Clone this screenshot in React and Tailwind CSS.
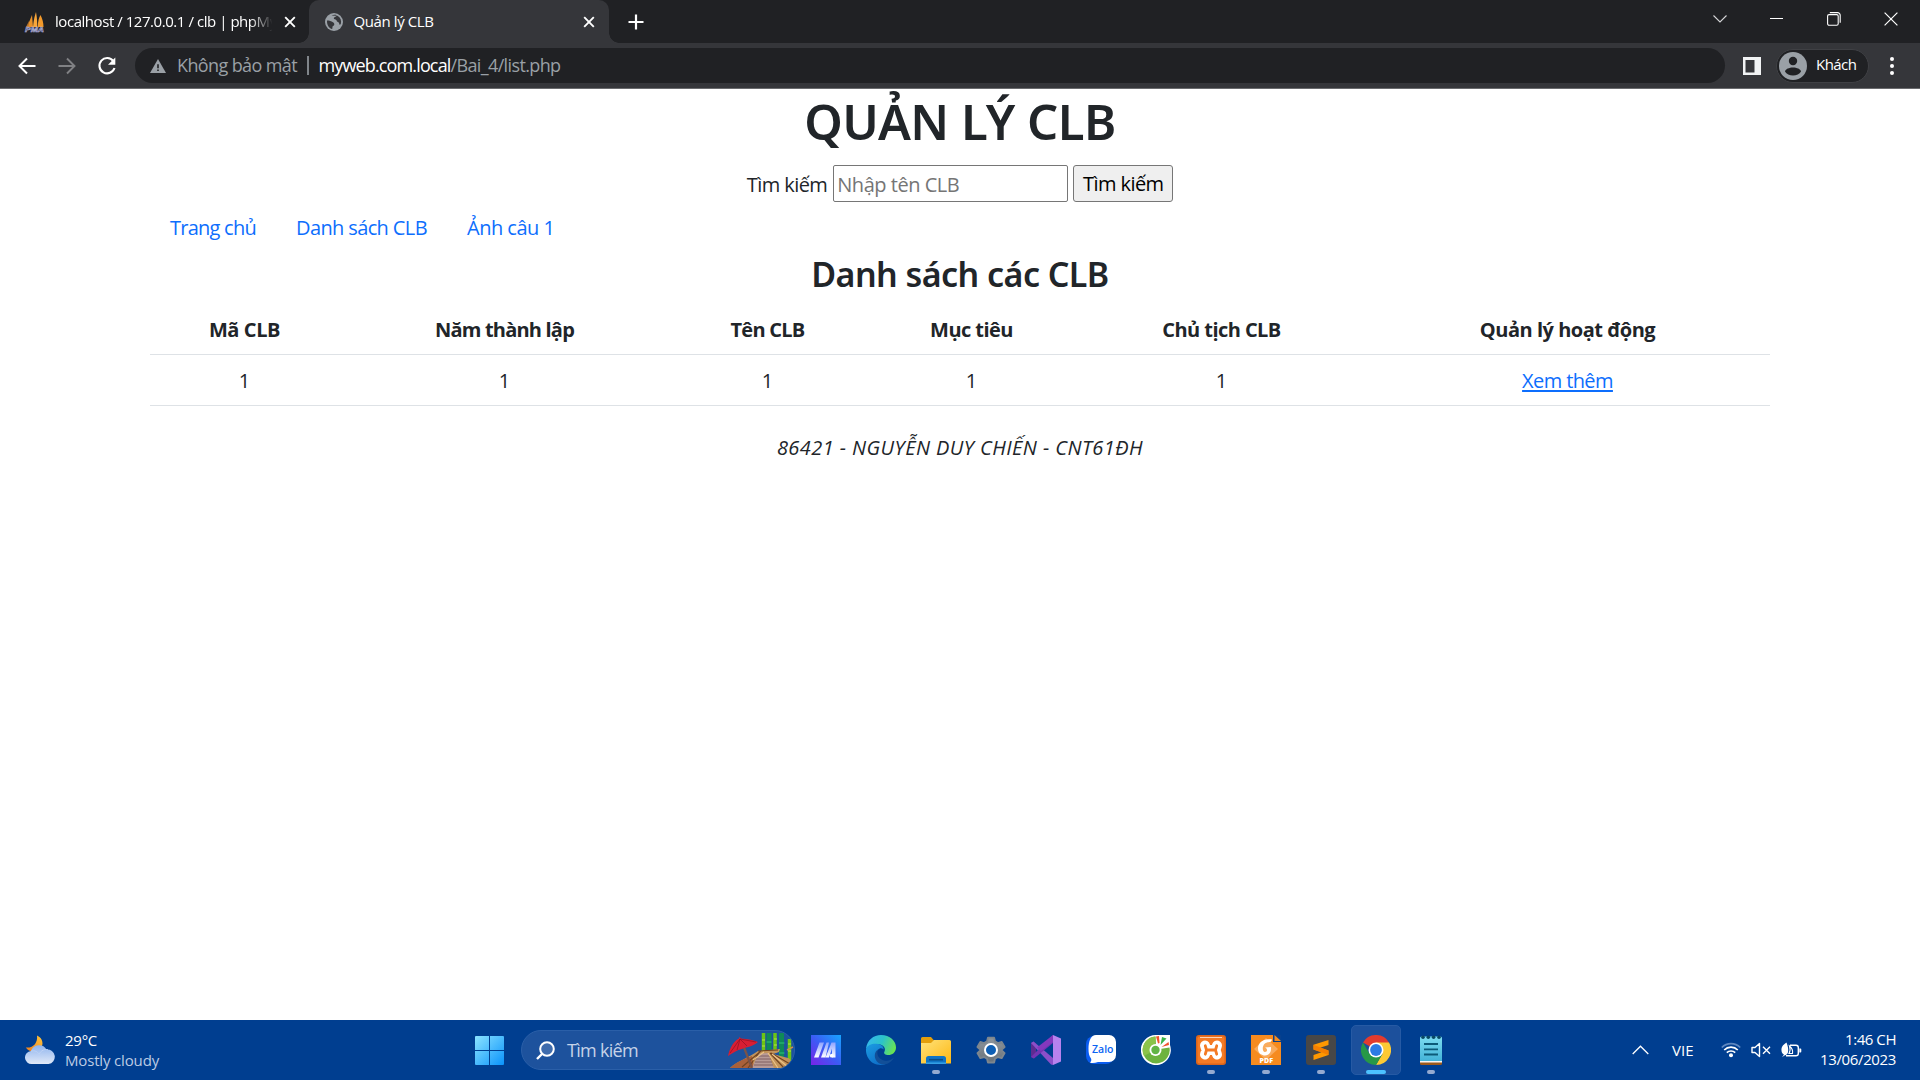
function PmaIcon() {
  return (
    <svg width="22" height="24" viewBox="0 0 22 24" className="shrink-0">
      <path d="M3 17 8 5 9 17Z" fill="#e8912a" />
      <path d="M9 17C9.500 10 11 5 12 2 13 8 13.500 13 13 17Z" fill="#f9a63a" />
      <path d="M13.500 17C14 11 15 7 16.500 5 18.500 9 19.500 13 19.500 17Z" fill="#f39a2c" />
      <path d="M2 17 5 11 4.500 17Z" fill="#b97428" />
      <text x="1" y="22" fontSize="7" fontWeight="800" fontStyle="italic" fontFamily="Liberation Sans, sans-serif" fill="#3b3c63" stroke="#b9bbe0" strokeWidth="0.500" textLength="19" lengthAdjust="spacingAndGlyphs">PMA</text>
    </svg>
  );
}

function GlobeIcon() {
  return (
    <svg width="18" height="18" viewBox="0 0 18 18" className="shrink-0">
      <circle cx="9" cy="9" r="9" fill="#9aa0a6" />
      <path d="M2 7.500 C3 7.200 6 7.800 8 9.200 C10 10.500 9.500 12.500 8 13 C7.200 13.300 7.500 15.500 7.200 16 C4 15.500 1.800 12 2 7.500Z" fill="#35363a" />
      <path d="M6.500 2.500 C8.500 1.600 10.500 1.800 11.500 2.200 C11.600 4 9.500 3.800 8.800 5 C8.500 6.500 10.500 6 11.500 7.200 C12 9.300 14 8.600 14.200 10.500 C14.300 12 15 12 15.800 11 C16.800 7.500 15.500 4.500 12.500 2.700Z" fill="#35363a" />
    </svg>
  );
}

function CloseIcon() {
  return (
    <svg width="12" height="12" viewBox="0 0 12 12" className="shrink-0" stroke="#fff" strokeWidth="1.900">
      <path d="M1.200 1.200 10.800 10.800M10.800 1.200 1.200 10.800" />
    </svg>
  );
}

function WindowControls() {
  return (
    <div className="ml-auto flex h-[37px] pr-px">
      <div className="flex w-[57px] items-center justify-center">
        <svg width="14" height="8" viewBox="0 0 14 8" fill="none" stroke="#d5d6d8" strokeWidth="1.100"><path d="M.5.500 7 7 13.500.5" /></svg>
      </div>
      <div className="flex w-[57px] items-center justify-center">
        <div className="h-px w-[13px] bg-white" />
      </div>
      <div className="flex w-[57px] items-center justify-center">
        <svg width="14" height="14" viewBox="0 0 14 14" fill="none" stroke="#fff" strokeWidth="1.100">
          <rect x=".6" y="2.600" width="10.600" height="10.600" rx="1.500" />
          <path d="M2.800.6h7.700a2.700 2.700 0 0 1 2.700 2.700v7.500" />
        </svg>
      </div>
      <div className="flex w-[57px] items-center justify-center">
        <svg width="14" height="14" viewBox="0 0 14 14" stroke="#fff" strokeWidth="1.200"><path d="M.6.600 13.400 13.400M13.400.6.600 13.400" /></svg>
      </div>
    </div>
  );
}

function TabStrip() {
  return (
    <div className="flex h-[43px] bg-[#202124] text-[15px] text-white">
      <div className="flex w-[309px] items-center pl-[24px] pr-[13px]">
        <PmaIcon />
        <div className="ml-[9px] whitespace-nowrap tracking-[-0.450px] [mask-image:linear-gradient(to_right,#000_88%,transparent_98%)]">localhost / 127.0.0.1 / clb | phpMy</div>
        <div className="ml-auto"><CloseIcon /></div>
      </div>
      <div className="relative flex w-[300px] items-center rounded-t-[10px] bg-[#35363a] pl-[16px] pr-[14px]">
        <div className="absolute -left-[10px] bottom-0 size-[10px] bg-[radial-gradient(circle_at_top_left,#202124_9.500px,#35363a_10px)]" />
        <div className="absolute -right-[10px] bottom-0 size-[10px] bg-[radial-gradient(circle_at_top_right,#202124_9.500px,#35363a_10px)]" />
        <GlobeIcon />
        <span className="ml-[10.500px] tracking-[-0.400px]">Quản lý CLB</span>
        <div className="ml-auto"><CloseIcon /></div>
      </div>
      <div className="flex items-center pl-[19px]">
        <svg width="16" height="16" viewBox="0 0 16 16" stroke="#fff" strokeWidth="2.200"><path d="M8 .5v15M.5 8h15" /></svg>
      </div>
      <WindowControls />
    </div>
  );
}

function Toolbar() {
  return (
    <div className="flex h-[46px] items-center border-b border-[#6a6b6e] bg-[#35363a] pl-[18px]">
      <svg width="18" height="18" viewBox="0 0 18 18" fill="none" stroke="#fff" strokeWidth="2"><path d="M17.500 9H2M9 1.500 1.500 9 9 16.500" /></svg>
      <svg width="18" height="18" viewBox="0 0 18 18" fill="none" stroke="#808184" strokeWidth="1.900" className="ml-[22px]"><path d="M.5 9H16M9 1.500 16.500 9 9 16.500" /></svg>
      <svg width="20" height="20" viewBox="0 0 20 20" className="ml-[21px]">
        <path d="M16.300 5A7.700 7.700 0 1 0 17.500 12" fill="none" stroke="#fff" strokeWidth="2.100" />
        <path d="M18.300 1.500v7.300h-7.300Z" fill="#fff" />
      </svg>
      <div className="ml-[18px] flex h-[35px] w-[1590px] items-center rounded-full bg-[#202124] pl-[15px] text-[18px]">
        <svg width="16" height="14" viewBox="0 0 16 14">
          <path d="M8 0 16 14H0Z" fill="#9aa0a6" />
          <path d="M7.200 5.200h1.600v4H7.200zM7.200 10.400h1.600V12H7.200z" fill="#202124" />
        </svg>
        <span className="ml-[11px] w-[121px] whitespace-nowrap tracking-[-0.610px] text-[#9aa0a6]">Không bảo mật</span>
        <div className="ml-[9px] h-[19px] w-[1.500px] bg-[#80858a]" />
        <span className="ml-[10px] tracking-[-0.860px] text-white">myweb.com.local</span>
        <span className="tracking-[-0.630px] text-[#9aa0a6]">/Bai_4/list.php</span>
      </div>
      <svg width="18" height="18" viewBox="0 0 18 18" className="ml-[18px]">
        <path d="M0 0h18v18H0zM2.500 3v12.500h9V3z" fill="#f1f3f4" fillRule="evenodd" />
      </svg>
      <div className="ml-[15px] flex h-[34px] w-[93px] items-center rounded-full border border-[#3f4044] bg-[#202124] pl-[2px]">
        <svg width="28" height="28" viewBox="0 0 28 28">
          <circle cx="14" cy="14" r="14" fill="#9aa0a6" />
          <circle cx="14" cy="9" r="4.200" fill="#202124" />
          <path d="M6 19.500C6 17 10.500 15.400 14 15.400s8 1.600 8 4.100C20.500 22 17.500 23.600 14 23.600S7.500 22 6 19.500Z" fill="#202124" />
        </svg>
        <span className="ml-[9px] pb-[2px] text-[15px] tracking-[-0.550px] text-white">Khách</span>
      </div>
      <div className="ml-[21px] flex flex-col gap-[3px]">
        <div className="size-[4px] rounded-full bg-white" />
        <div className="size-[4px] rounded-full bg-white" />
        <div className="size-[4px] rounded-full bg-white" />
      </div>
    </div>
  );
}

function Page() {
  return (
    <main className="flex-1 bg-white px-[150px] text-center text-[20px] leading-[30px] text-[#212529]">
      <h1 className="pt-[2px] font-['Noto_Sans',sans-serif] text-[49px] font-[560] leading-[60px] tracking-[-0.500px]">QUẢN LÝ CLB</h1>
      <form className="mt-[14px] flex h-[37px] justify-center leading-[39px]">
        <label className="tracking-[-0.570px]">Tìm kiếm</label>
        <input placeholder="Nhập tên CLB" className="ml-[6px] w-[235px] rounded-[2px] border-[1.500px] border-[#767676] px-[3px] pt-[2px] tracking-[-0.470px] placeholder:text-[#757575]" />
        <button type="button" className="ml-[5px] w-[100px] rounded-[3px] border-[1.500px] border-[#767676] bg-[#efefef] leading-[36px] tracking-[-0.570px] text-black">Tìm kiếm</button>
      </form>
      <nav className="flex h-[50px] items-center whitespace-nowrap pt-[2px] text-[#0d6efd]">
        <a className="w-[127px] pl-[20px] text-left tracking-[-0.750px]">Trang chủ</a>
        <a className="w-[170px] pl-[19px] text-left tracking-[-0.620px]">Danh sách CLB</a>
        <a className="pl-[20px] text-left tracking-[-0.500px]">Ảnh câu 1</a>
      </nav>
      <h3 className="pt-px font-['Noto_Sans',sans-serif] text-[34px] font-[560] leading-[42px] tracking-[-0.550px]">Danh sách các CLB</h3>
      <table className="mt-[8px] w-[1620px] table-fixed border-collapse">
        <colgroup>
          <col className="w-[189px]" />
          <col className="w-[331px]" />
          <col className="w-[195px]" />
          <col className="w-[213px]" />
          <col className="w-[287px]" />
          <col className="w-[405px]" />
        </colgroup>
        <thead>
          <tr className="h-[51px] border-b border-[#dee2e6] font-bold">
            <th className="pt-[3px] tracking-[-0.400px]">Mã CLB</th>
            <th className="pt-[3px] tracking-[-0.800px]">Năm thành lập</th>
            <th className="pt-[3px] tracking-[-0.750px]">Tên CLB</th>
            <th className="pt-[3px] tracking-[-0.550px]">Mục tiêu</th>
            <th className="pt-[3px] tracking-[-0.560px]">Chủ tịch CLB</th>
            <th className="pt-[3px] tracking-[-0.480px]">Quản lý hoạt động</th>
          </tr>
        </thead>
        <tbody>
          <tr className="h-[51px] border-b border-[#dee2e6]">
            <td className="pt-[2px]">1</td>
            <td className="pt-[2px]">1</td>
            <td className="pt-[2px]">1</td>
            <td className="pt-[2px]">1</td>
            <td className="pt-[2px]">1</td>
            <td className="pt-[2px]"><a className="tracking-[-0.600px] text-[#0d6efd] underline decoration-2 underline-offset-2">Xem thêm</a></td>
          </tr>
        </tbody>
      </table>
      <footer className="mt-[27px] italic tracking-[0.430px]">86421 - NGUYỄN DUY CHIẾN - CNT61ĐH</footer>
    </main>
  );
}

function WeatherIcon() {
  return (
    <svg width="31" height="30" viewBox="0 0 31 30">
      <defs>
        <linearGradient id="moon" x1="1" y1="0" x2="0" y2="1"><stop offset="0" stopColor="#ffc83d" /><stop offset="1" stopColor="#ee7b1c" /></linearGradient>
        <linearGradient id="cloud" x1="0" y1="0" x2="0" y2="1"><stop offset="0" stopColor="#8fb4ee" /><stop offset="1" stopColor="#e0e9f8" /></linearGradient>
      </defs>
      <path d="M12 .5C18 3 19 10 15.500 13.500 11 18 4 17.500 .8 12.500 8 13.500 13 8 12 .5Z" fill="url(#moon)" />
      <path d="M7 29A6.500 6.500 0 0 1 6 16 8.500 8.500 0 0 1 21.500 14.500 7.300 7.300 0 0 1 23.500 29Z" fill="url(#cloud)" />
      <path d="M6 16.200C10 15 13 17 14 19.500M14 19.500C16 15 20 14 23 14.800" fill="none" stroke="#bdd2f5" strokeWidth="1" />
    </svg>
  );
}

function StartIcon() {
  return (
    <svg width="29" height="29" viewBox="0 0 29 29">
      <defs><linearGradient id="win" x1="0" y1="0" x2="1" y2="1"><stop offset="0" stopColor="#8be3ff" /><stop offset="1" stopColor="#0a93fb" /></linearGradient></defs>
      <path d="M1 0h13v14H0V1a1 1 0 0 1 1-1ZM15 0h13a1 1 0 0 1 1 1v13H15ZM0 15h14v14H1a1 1 0 0 1-1-1ZM15 15h14v13a1 1 0 0 1-1 1H15Z" fill="url(#win)" />
    </svg>
  );
}

function BeachArt() {
  return (
    <svg width="66" height="38" viewBox="0 0 66 38">
      <g strokeWidth="3.500">
        <path d="M35.500 2v20M47 2v20M61.500 8v22" stroke="#6cc514" />
        <path d="M41 2v20M53.500 2v24" stroke="#0f8a58" strokeWidth="5" />
        <path d="M34 9h3M46 8h3M34 15h3M46 14h3M60 13h3M60 20h3" stroke="#b7e04a" strokeWidth="1" />
        <path d="M38.500 11h5M51 12h5.500M51 22h5.500" stroke="#2fc27b" strokeWidth="1" />
      </g>
      <path d="M59 19 65 16" stroke="#c98f4c" strokeWidth="1.500" />
      <path d="M2 37C8 31 20 27 30 20L52 18 51 21 45 23 60 27C64 28 64 33 57 37Z" fill="#c2935a" />
      <path d="M2 37C8 31 16 28 24 25L26 37Z" fill="#a9603a" />
      <path d="M30 23 40 22 46 37H24Z" fill="#b79a97" />
      <path d="M29 25H42M28 28H43M27 31H44M26 34H45" stroke="#7c5a5c" strokeWidth=".9" />
      <path d="M33 20 14 36M31 22 20 37M42 22 56 37M43 22 62 33M30 20 50 19" stroke="#71431f" strokeWidth="1.100" fill="none" />
      <path d="M40 22 50 37M44 23 60 36M36 21 25 29" stroke="#eac288" strokeWidth="1.200" />
      <path d="M15 14 24 37" stroke="#7a5348" strokeWidth="2.200" />
      <path d="M0 25C2 16 6 10 11 7.500L11.500 6 13 7.500C20 8 26 9 30 11 24 16 18 16 14 18 9 19 5 22 0 25Z" fill="#d81e33" />
      <path d="M12 8 2 22M12 8 9 19M12 8 19 15M12 8 28 11" stroke="#8f1024" strokeWidth=".7" />
    </svg>
  );
}

function MaIcon() {
  return (
    <svg width="30" height="30" viewBox="0 0 30 30">
      <defs>
        <linearGradient id="ma" x1="1" y1="0" x2="0" y2="1"><stop offset="0" stopColor="#16a5ff" /><stop offset=".5" stopColor="#3b5cf5" /><stop offset="1" stopColor="#7a22e8" /></linearGradient>
        <linearGradient id="maf" x1="0" y1="0" x2="0" y2="1"><stop offset="0" stopColor="#8fa3ff" /><stop offset="1" stopColor="#fff" /></linearGradient>
      </defs>
      <path d="M0 0h30v30H0Z" fill="url(#ma)" />
      <path d="M8.500 7.500H13L7.500 22.500H3Z" fill="url(#maf)" />
      <path d="M15.500 7.500H18L14.500 22.500H10Z" fill="url(#maf)" />
      <path d="M20.500 7.500H24.500V22.500H21V13.500L18 22.500H14.500Z" fill="url(#maf)" />
      <circle cx="20.700" cy="20.700" r="1.900" fill="#fff" />
    </svg>
  );
}

function EdgeIcon() {
  return (
    <svg width="30" height="30" viewBox="0 0 30 30">
      <defs>
        <linearGradient id="e1" x1="0" y1=".3" x2="1" y2=".6"><stop offset="0" stopColor="#35b7ee" /><stop offset=".5" stopColor="#2cc3c9" /><stop offset="1" stopColor="#6be34f" /></linearGradient>
        <linearGradient id="e2" x1="0" y1="0" x2=".6" y2="1"><stop offset="0" stopColor="#1b9de2" /><stop offset="1" stopColor="#0f6fc9" /></linearGradient>
      </defs>
      <path d="M0 14C1 5 7.500 0 15 0 24 0 30 6 30 12.500 30 17.500 26 20 22.500 20 19 20 17.500 18.500 18.300 17 20.500 13 17 9 11 9 5.500 9 1.500 12 0 14Z" fill="url(#e1)" />
      <path d="M0 14C1.500 10 6 8.500 10.500 8.800 15.500 9.200 18 12 17.500 14.500 15 11.500 10.500 14 10.500 19 10.500 24.500 14.500 28.500 20.500 28.700 14 31.500 6 29.500 2.500 23.500 .5 20.500-.2 17 0 14Z" fill="url(#e2)" />
      <path d="M12 14.500C10 19 12.500 24 18 25.500 22.500 26.600 25.500 24.500 28 22.500 26.500 26 22 29.500 17.500 29.500 11.500 29 8.500 24.500 8.800 20 9 17.500 10.200 15.500 12 14.500Z" fill="#124f98" />
    </svg>
  );
}

function FolderIcon() {
  return (
    <svg width="30" height="30" viewBox="0 0 30 30">
      <defs><linearGradient id="fd" x1="0" y1="0" x2="1" y2="1"><stop offset="0" stopColor="#ffe27a" /><stop offset="1" stopColor="#fdb813" /></linearGradient></defs>
      <path d="M0 3.500A1.500 1.500 0 0 1 1.500 2H10l3 3.500V10H0Z" fill="#e39e0b" />
      <path d="M0 8h10l3-3H28.500A1.500 1.500 0 0 1 30 6.500V28.500H0Z" fill="url(#fd)" />
      <path d="M5 29V23.500A2.500 2.500 0 0 1 7.500 21h15a2.500 2.500 0 0 1 2.500 2.500V29Z" fill="#0f74c6" />
      <path d="M8 24.700H22" stroke="#0a4d86" strokeWidth="1.600" />
      <path d="M5 28.200H25" stroke="#36a3e8" strokeWidth="1.500" />
    </svg>
  );
}

function GearIcon() {
  return (
    <svg width="30" height="30" viewBox="0 0 30 30">
      <defs><linearGradient id="gr" x1="0" y1="0" x2="0" y2="1"><stop offset="0" stopColor="#8f979e" /><stop offset="1" stopColor="#69727a" /></linearGradient></defs>
      <g fill="url(#gr)" stroke="#7d868e" strokeLinejoin="round" strokeWidth="2">
        <path d="M11.800 2h6.400l1 4 3 1.700 4-1.200 3 5.300-3 2.800v.8l3 2.800-3 5.300-4-1.200-3 1.700-1 4h-6.400l-1-4-3-1.700-4 1.200-3-5.300 3-2.800v-.8l-3-2.800 3-5.300 4 1.200 3-1.700Z" transform="translate(.7 .7) scale(.955)" />
      </g>
      <circle cx="15" cy="15" r="6" fill="#0e5fb5" stroke="#fff" strokeWidth="2" />
    </svg>
  );
}

function VisualStudioIcon() {
  return (
    <svg width="30" height="30" viewBox="0 0 30 30">
      <path d="M0 8 2.500 6.500 5 8.500V21.500L2.500 23.500 0 22Z" fill="#5c2c91" />
      <path d="M0 8 2.500 6.500 22 23V30L20 29.500Z" fill="#8b4fc9" />
      <path d="M0 22 22 0V8L3 23.500Z" fill="#7434b3" />
      <path d="M22 0 30 3.500V26.500L22 30Z" fill="#b782ee" />
      <path d="M22 0V7L10 16 6 12.500Z" fill="#8438bd" />
    </svg>
  );
}

function ZaloIcon() {
  return (
    <svg width="30" height="30" viewBox="0 0 30 30">
      <rect x="0" y="1" width="28" height="28" rx="8" fill="#0a5cf0" />
      <path d="M10 0H23A7 7 0 0 1 30 7V20A7 7 0 0 1 23 27H12C9 28 6 28.500 4 27.500 5.500 26 5.500 25 5 23.500 3 21 2.500 18 2.500 14 2.500 6 5 0 10 0Z" fill="#fff" />
      <text x="6" y="17.500" fontSize="10" fontWeight="600" fontFamily="Open Sans, sans-serif" fill="#0a63f3" textLength="21.500" lengthAdjust="spacingAndGlyphs">Zalo</text>
    </svg>
  );
}

function CocCocIcon() {
  return (
    <svg width="30" height="30" viewBox="0 0 30 30">
      <path d="M15 0H29V10A15 15 0 1 1 15 0Z" fill="#fff" />
      <path d="M14.500 1.500A13.500 13.500 0 1 0 28.500 12.500L19 14A5 5 0 1 1 15 10.200Z" fill="#6db33f" />
      <path d="M14.500 1.500A13.500 13.500 0 0 0 3 21L9.500 17.500A6 6 0 0 1 14.500 9Z" fill="#8bc34a" />
      <circle cx="14.500" cy="15" r="6" fill="#fff" />
      <circle cx="14.500" cy="15" r="4.200" fill="#62b445" />
      <path d="M15 1.500 18 1 18.500 8 17 8.500Z" fill="#f0532d" />
      <path d="M21 2 25.500 3.500 19.500 10Z" fill="#39b54a" />
      <path d="M27.500 7 28 10 20.500 12Z" fill="#f0532d" />
    </svg>
  );
}

function XamppIcon() {
  return (
    <svg width="30" height="30" viewBox="0 0 30 30">
      <rect width="30" height="30" rx="3" fill="#d9641c" />
      <rect x="1.500" y="1.500" width="27" height="27" rx="2" fill="#f47a24" />
      <path d="M4 2.500H26" stroke="#fbd3b4" strokeWidth="1" />
      <g fill="none" strokeLinecap="round" strokeLinejoin="round">
        <path d="M9 10.500 10.500 15 9 19.500M21 10.500 19.500 15 21 19.500M10.500 15H19.500" stroke="#fff" strokeWidth="10" />
        <path d="M9.300 10.800 10.500 15 9.300 19.200M20.700 10.800 19.500 15 20.700 19.200M10.500 15H19.500" stroke="#f47a24" strokeWidth="2.800" />
        <path d="M15 5V8.500M15 21.500V25" stroke="#f47a24" strokeWidth="2" />
      </g>
    </svg>
  );
}

function FoxitIcon() {
  return (
    <svg width="30" height="30" viewBox="0 0 30 30">
      <path d="M0 0H22L30 6V30H0Z" fill="#f68b1f" />
      <path d="M3 14 15 3 27 14 15 25Z" fill="#f9ab5d" />
      <path d="M22 0H30V7H22Z" fill="#08408c" />
      <path d="M23.500 0 30 6H23.500Z" fill="#f68b1f" />
      <path d="M21 4.500C12 3 7 8 7 13.500 7 18.500 11 20.500 14 20.500 18.500 20.500 20.500 16.500 20 12L14 12.500C17 14 16.500 17 14 17 11 17 10.500 9 16 7.500 18 7 20.500 7.500 21 4.500Z" fill="#fff" />
      <text x="8.500" y="28" fontSize="6.500" fontWeight="800" fontFamily="Open Sans, sans-serif" fill="#fff" textLength="13.500" lengthAdjust="spacingAndGlyphs">PDF</text>
    </svg>
  );
}

function SublimeIcon() {
  return (
    <svg width="30" height="30" viewBox="0 0 30 30">
      <rect width="30" height="30" rx="3" fill="#474747" />
      <path d="M22.500 5V10L14 12.700 22.500 15.500V20L7.500 25V20L15.500 17.300 7.500 14.500V9.800Z" fill="#ff9800" />
      <path d="M7.500 9.800V14.500L22.500 20V15.500Z" fill="#f57f00" />
    </svg>
  );
}

function ChromeIcon() {
  return (
    <svg width="30" height="30" viewBox="0 0 30 30">
      <path d="M15 15 2 7.500A15 15 0 0 1 28 7.500Z" fill="#e33b2e" />
      <path d="M15 7.500H28A15 15 0 0 1 15 30L21.500 18.700Z" fill="#fcc934" />
      <path d="M2 7.500 8.500 18.700 15 22.500 21.500 18.700 15 30A15 15 0 0 1 2 7.500Z" fill="#279847" />
      <circle cx="15" cy="15" r="7.500" fill="#fff" />
      <circle cx="15" cy="15" r="5.900" fill="#2c7be5" />
    </svg>
  );
}

function NotepadIcon() {
  return (
    <svg width="22" height="30" viewBox="0 0 22 30">
      <defs><linearGradient id="np" x1="0" y1="0" x2="0" y2="1"><stop offset="0" stopColor="#7cdcf0" /><stop offset="1" stopColor="#43b3d8" /></linearGradient></defs>
      <path d="M0 26H22V28.500A1.500 1.500 0 0 1 20.500 30H1.500A1.500 1.500 0 0 1 0 28.500Z" fill="#9b5a1c" />
      <path d="M0 25H22V27.500H0Z" fill="#f4f4f4" />
      <path d="M0 3A1.500 1.500 0 0 1 1.500 1.500H20.500A1.500 1.500 0 0 1 22 3V26H0Z" fill="url(#np)" />
      <path d="M4 9H18M4 14.300H18M4 19.500H18" stroke="#0c5a78" strokeWidth="1.800" />
      <g fill="#0a4863"><circle cx="3" cy="2.200" r="1.800" /><circle cx="8.300" cy="2.200" r="1.800" /><circle cx="13.600" cy="2.200" r="1.800" /><circle cx="19" cy="2.200" r="1.800" /></g>
    </svg>
  );
}

const apps = [
  { name: "asus", Icon: MaIcon },
  { name: "edge", Icon: EdgeIcon },
  { name: "explorer", Icon: FolderIcon, open: true },
  { name: "settings", Icon: GearIcon },
  { name: "vs", Icon: VisualStudioIcon },
  { name: "zalo", Icon: ZaloIcon },
  { name: "coccoc", Icon: CocCocIcon },
  { name: "xampp", Icon: XamppIcon, open: true },
  { name: "foxit", Icon: FoxitIcon, open: true },
  { name: "sublime", Icon: SublimeIcon, open: true },
  { name: "chrome", Icon: ChromeIcon, active: true },
  { name: "notepad", Icon: NotepadIcon, open: true },
];

function AppButton({ Icon, open, active }) {
  return (
    <div className="flex h-[60px] w-[55px] items-center justify-center">
      <div className={`relative flex size-[50px] items-center justify-center rounded-[5px] ${active ? "border border-[#265aa4] bg-[#1c509c]" : ""}`}>
        <Icon />
        {open && <div className="absolute bottom-[1px] h-[4px] w-[8px] rounded-full bg-[#94aad0]" />}
        {active && <div className="absolute bottom-0 h-[4px] w-[20px] rounded-full bg-[#4cc2ff]" />}
      </div>
    </div>
  );
}

function Tray() {
  return (
    <div className="ml-auto flex items-center pr-[24px] text-[15px] text-white">
      <svg width="17" height="10" viewBox="0 0 17 10" fill="none" stroke="#fff" strokeWidth="1.300"><path d="M.7 9 8.500 1.200 16.300 9" /></svg>
      <span className="ml-[23px] w-[22px]">VIE</span>
      <svg width="20" height="16" viewBox="0 0 20 16" fill="none" strokeWidth="1.700" className="ml-[27px]">
        <path d="M.8 5.500A13 13 0 0 1 19.200 5.500" stroke="#5f87bf" />
        <path d="M3.200 8A9.600 9.600 0 0 1 16.800 8" stroke="#fff" />
        <path d="M5.800 10.700A6 6 0 0 1 14.200 10.700" stroke="#fff" />
        <circle cx="10" cy="13.300" r="2" fill="#fff" />
      </svg>
      <svg width="20" height="16" viewBox="0 0 20 16" fill="none" stroke="#fff" strokeWidth="1.400" className="ml-[10px]">
        <path d="M1 5.500H4L8.500 1.500V14.500L4 10.500H1Z" strokeLinejoin="round" />
        <path d="M12 4.700 19 11.700M19 4.700 12 11.700" />
      </svg>
      <svg width="21" height="16" viewBox="0 0 21 16" className="ml-[10px]">
        <path d="M9 3.200H15A2.300 2.300 0 0 1 17.300 5.500V11.500A2.300 2.300 0 0 1 15 13.800H5" fill="none" stroke="#fff" strokeWidth="1.400" />
        <path d="M18.300 6.500H19.500A1 1 0 0 1 20.300 7.500V9.500A1 1 0 0 1 19.500 10.500H18.300Z" fill="#fff" />
        <path d="M5.500 .5C1.500 3 .3 5.500 .5 8.500 .6 10.500 1.500 12 3 12.500L1 15.300 3.500 13.500C7.500 13 8.500 8 5.500 .5Z" fill="#fff" />
        <path d="M8.500 4C9.500 7 9.500 9 8 11.500H11.500C12 9 11 6 8.500 4Z" fill="none" stroke="#fff" strokeWidth="1.100" />
      </svg>
      <div className="ml-[18px] flex w-[76px] flex-col items-end pb-[2px] leading-[20px]">
        <span className="tracking-[-0.440px]">1:46 CH</span>
        <span className="tracking-[-0.360px]">13/06/2023</span>
      </div>
    </div>
  );
}

function Taskbar() {
  return (
    <div className="flex h-[60px] items-center bg-[#003e90] font-['Open_Sans',sans-serif]">
      <div className="flex w-[464px] items-center pl-[25px] text-[15px] leading-[20px] text-white">
        <WeatherIcon />
        <div className="ml-[9px] flex flex-col">
          <span className="tracking-[-0.260px]">29°C</span>
          <span className="tracking-[-0.160px] text-[#bccbe3]">Mostly cloudy</span>
        </div>
      </div>
      <div className="flex w-[51px] justify-center"><StartIcon /></div>
      <div className="ml-[6px] flex h-[40px] w-[274px] items-center rounded-full border border-[#2a5fa8] bg-[#1d529d] pl-[14px]">
        <svg width="19" height="19" viewBox="0 0 19 19" fill="none" stroke="#fff" strokeWidth="2">
          <circle cx="11" cy="8" r="6.800" fill="#3f6cad" />
          <path d="M6 13 1 18" strokeWidth="2.400" />
        </svg>
        <span className="ml-[12px] text-[18px] tracking-[-0.700px] text-[#c6d3e8]">Tìm kiếm</span>
        <div className="ml-auto overflow-hidden rounded-r-full"><BeachArt /></div>
      </div>
      <div className="ml-[3.500px] flex">
        {apps.map((app) => <AppButton key={app.name} {...app} />)}
      </div>
      <Tray />
    </div>
  );
}

export default function App() {
  return (
    <div className="flex h-[1080px] w-[1920px] flex-col overflow-hidden font-['Open_Sans',sans-serif]">
      <TabStrip />
      <Toolbar />
      <Page />
      <Taskbar />
    </div>
  );
}
